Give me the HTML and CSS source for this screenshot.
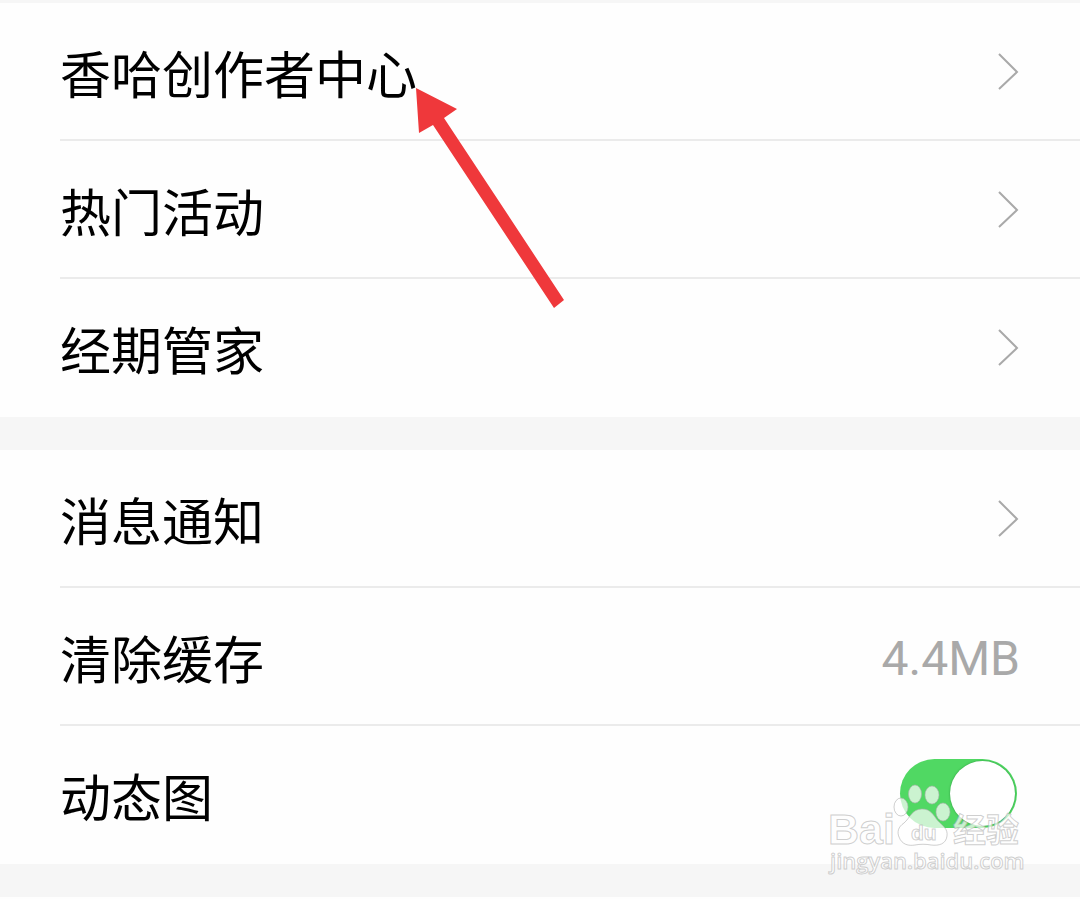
FILE: index.html
```html
<!DOCTYPE html>
<html lang="zh-CN">
  <head>
    <meta charset="UTF-8" />
    <meta name="viewport" content="width=device-width, initial-scale=1.0" />
    <title>设置</title>
    <link rel="stylesheet" href="styles.css" />
  </head>
  <body>
    <main class="settings">
      <!-- [1] Services -->
      <ul class="group">
        <li>
          <a class="row" href="#creator">
            <span class="label">香哈创作者中心</span>
            <svg class="chevron" viewBox="0 0 22 38" aria-hidden="true">
              <path d="M1 1 19 19 1 36" />
            </svg>
          </a>
          <svg class="arrow" viewBox="0 0 150 222" aria-hidden="true">
            <path d="M1 1 42 22 29 31 149 213 139 221 18 38 4 46Z" />
          </svg>
        </li>
        <li>
          <a class="row" href="#events">
            <span class="label">热门活动</span>
            <svg class="chevron" viewBox="0 0 22 38" aria-hidden="true">
              <path d="M1 1 19 19 1 36" />
            </svg>
          </a>
        </li>
        <li>
          <a class="row" href="#period">
            <span class="label">经期管家</span>
            <svg class="chevron" viewBox="0 0 22 38" aria-hidden="true">
              <path d="M1 1 19 19 1 36" />
            </svg>
          </a>
        </li>
      </ul>

      <!-- [2] Preferences -->
      <ul class="group">
        <li>
          <a class="row" href="#notice">
            <span class="label">消息通知</span>
            <svg class="chevron" viewBox="0 0 22 38" aria-hidden="true">
              <path d="M1 1 19 19 1 36" />
            </svg>
          </a>
        </li>
        <li>
          <button class="row" type="button">
            <span class="label">清除缓存</span>
            <span class="value">4.4MB</span>
          </button>
        </li>
        <li>
          <div class="row">
            <label class="label" for="motion">动态图</label>
            <input class="switch" id="motion" type="checkbox" checked />
          </div>
          <svg class="watermark" viewBox="0 0 200 110" role="img" aria-label="Baidu经验">
            <ellipse cx="74" cy="36" rx="7" ry="9" />
            <ellipse cx="88" cy="23" rx="6.5" ry="9" />
            <ellipse cx="105" cy="24" rx="7" ry="9" />
            <ellipse cx="116" cy="41" rx="7" ry="9" />
            <path d="M95 38c-10 0-12 9-18 14-6 4-7 9-5 14 3 8 10 9 16 8 5-1 11-1 16 0 8 1 15-1 16-9 1-7-4-10-9-15-5-6-7-12-16-12Z" />
            <text class="brand" x="1" y="73">Bai</text>
            <text class="brand-du" x="84" y="69">du</text>
            <text class="brand-cn" x="126" y="71">经验</text>
            <text class="site" x="3" y="98">jingyan.baidu.com</text>
          </svg>
        </li>
      </ul>
    </main>
  </body>
</html>
```

FILE: styles.css
```css
/*
  Global styles
*/

* {
  margin: 0;
  padding: 0;
  box-sizing: border-box;
}
:root {
  --ink: #000;
  --gray: #a9a9a9;
  --line: #ebebeb;
  --band: #f6f6f6;
  --green: #50d863;
  --red: #ef383b;
}
body {
  color: var(--ink);
  background-color: #fefefe;
  font-family: Roboto, "Noto Sans CJK SC", sans-serif;
}

/*
  Component styles
*/

/* [1] Layout */
.settings {
  border-top: 3px solid var(--band);
}
.group {
  list-style: none;
  border-bottom: 33px solid var(--band);
}
.group li {
  position: relative;
}
.group li + li::before {
  content: "";
  position: absolute;
  top: -2px;
  left: 60px;
  right: 0;
  height: 2px;
  background-color: var(--line);
}
.row {
  width: 100%;
  height: 138px;
  display: flex;
  align-items: center;
  justify-content: space-between;
  padding: 0 60px;
  border: 0;
  background: none;
  color: inherit;
  font: inherit;
  text-decoration: none;
}

/* [2] Row contents */
.label {
  padding-top: 10px;
  font-size: 51px;
  line-height: 72px;
}
.value {
  padding-top: 4px;
  color: var(--gray);
  font-size: 48px;
  line-height: 72px;
}
.chevron {
  width: 22px;
  height: 38px;
  fill: none;
  stroke: var(--gray);
  stroke-width: 2;
}
.switch {
  appearance: none;
  width: 117px;
  height: 69px;
  display: flex;
  justify-content: flex-end;
  padding: 2px;
  margin: 0 3px 4px 0;
  border-radius: 35px;
  background-color: #ccc;
}
.switch:checked {
  background-color: var(--green);
}
.switch::before {
  content: "";
  width: 65px;
  height: 65px;
  border-radius: 50%;
  background-color: #fff;
  box-shadow: 0 0 2px rgba(0, 80, 20, 0.5);
}
.switch:not(:checked) {
  justify-content: flex-start;
}

/* [3] Overlays */
.arrow {
  position: absolute;
  z-index: 1;
  top: 84px;
  left: 415px;
  width: 150px;
  height: 222px;
  fill: var(--red);
  pointer-events: none;
}
.watermark {
  position: absolute;
  z-index: 1;
  top: 45px;
  right: 53px;
  width: 200px;
  height: 110px;
  fill: rgba(255, 255, 255, 0.7);
  stroke: rgba(175, 175, 175, 0.6);
  stroke-width: 1;
  font-family: "Open Sans", "Noto Sans CJK SC", sans-serif;
  pointer-events: none;
}
.brand {
  font: 700 43px "Liberation Sans", sans-serif;
}
.brand-du {
  font: 700 21px "Liberation Sans", sans-serif;
}
.brand-cn {
  font-size: 33px;
  font-weight: 700;
}
.site {
  font-size: 22px;
  font-weight: 600;
}
```
